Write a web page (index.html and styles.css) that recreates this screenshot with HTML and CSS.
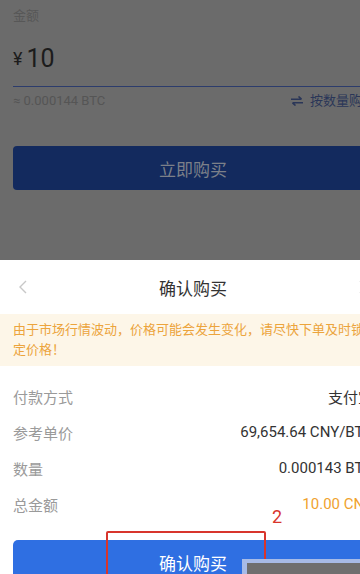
FILE: index.html
```html
<!DOCTYPE html>
<html lang="zh">
<head>
<meta charset="utf-8">
<link rel="stylesheet" href="styles.css">
</head>
<body>
<div class="page">
  <section class="top">
    <div class="label">金额</div>
    <div class="amount"><span class="yen">¥</span><span class="num">10</span></div>
    <div class="sub">
      <span class="approx">≈ 0.000144 BTC</span>
      <span class="switch"><svg class="swap" width="12" height="10" viewBox="0 0 12 10"><path d="M0 3.2h10.5M7.5 0.5l3 2.7M12 6.8H1.5M4.5 9.5l-3-2.7" fill="none" stroke="currentColor" stroke-width="1.6"/></svg>按数量购买</span>
    </div>
    <div class="buy-btn">立即购买</div>
  </section>
  <section class="sheet">
    <div class="head">
      <svg class="chev" width="10" height="14" viewBox="0 0 10 14"><path d="M8 1L2 7l6 6" fill="none" stroke="#c8c8c8" stroke-width="1.4"/></svg>
      <div class="title">确认购买</div>
      <svg class="chev" width="10" height="14" viewBox="0 0 10 14"><path d="M2 1l6 6-6 6" fill="none" stroke="#c8c8c8" stroke-width="1.4"/></svg>
    </div>
    <div class="notice">由于市场行情波动，价格可能会发生变化，请尽快下单及时锁定价格！</div>
    <div class="rows">
      <div class="row"><span class="k">付款方式</span><span class="v">支付宝</span></div>
      <div class="row"><span class="k">参考单价</span><span class="v">69,654.64 CNY/BTC</span></div>
      <div class="row"><span class="k">数量</span><span class="v">0.000143 BTC</span></div>
      <div class="row"><span class="k">总金额</span><span class="v total">10.00 CNY</span></div>
    </div>
    <div class="confirm-btn">确认购买</div>
  </section>
</div>
<div class="mark-box"></div>
<div class="mark-num">2</div>
<div class="toast"></div>
</body>
</html>
```
FILE: styles.css
```css
html, body {
  margin: 0;
  padding: 0;
}
body {
  width: 360px;
  height: 574px;
  overflow: hidden;
  position: relative;
  background: #6b6b6b;
  font-family: Roboto, "Noto Sans CJK SC", sans-serif;
}
.page {
  width: 386px;
}
.top {
  padding: 7px 0 0 13px;
}
.label {
  font-size: 13px;
  line-height: 18px;
  color: #575757;
}
.amount {
  margin-top: 15px;
  height: 36px;
  padding-bottom: 10px;
  border-bottom: 1px solid #2c3c6c;
  display: flex;
  align-items: center;
  color: #1c1c1c;
}
.yen {
  font-size: 18px;
  margin-right: 4px;
}
.num {
  font-size: 25px;
}
.sub {
  margin-top: 5px;
  display: flex;
  justify-content: space-between;
  align-items: center;
  line-height: 18px;
  padding-right: 13px;
}
.approx {
  color: #555;
  font-size: 13px;
}
.switch {
  color: #2a3658;
  display: flex;
  align-items: center;
  gap: 7px;
  font-size: 13px;
  margin-right: -2px;
}
.buy-btn {
  margin: 36px 13px 0 0;
  height: 44px;
  border-radius: 4px;
  background: #132a5e;
  color: #7c8089;
  font-size: 17px;
  display: flex;
  align-items: center;
  justify-content: center;
}
.sheet {
  margin-top: 70px;
  background: #fff;
  height: 330px;
}
.head {
  height: 54px;
  display: flex;
  align-items: center;
  justify-content: space-between;
  padding: 0 18px;
}
.title {
  font-size: 17px;
  color: #333;
}
.notice {
  background: #fdf6e8;
  color: #eca43c;
  font-size: 13px;
  line-height: 20px;
  padding: 6px 13px;
}
.rows {
  padding: 12px 13px 0;
}
.row {
  height: 36px;
  display: flex;
  align-items: center;
  justify-content: space-between;
  font-size: 15px;
}
.k {
  color: #9a9a9a;
}
.v {
  color: #333;
}
.v.total {
  color: #f0a22e;
}
.confirm-btn {
  margin: 18px 13px 0;
  height: 44px;
  border-radius: 5px;
  background: #2f6fe2;
  color: #fff;
  font-size: 17px;
  display: flex;
  align-items: center;
  justify-content: center;
}
.mark-box {
  position: absolute;
  left: 106px;
  top: 531px;
  width: 156px;
  height: 60px;
  border: 2.5px solid #d8352c;
  border-radius: 2px;
}
.mark-num {
  position: absolute;
  left: 272px;
  top: 506px;
  font-size: 18px;
  line-height: 22px;
  color: #d8352c;
}
.toast {
  position: absolute;
  left: 242px;
  top: 559px;
  width: 140px;
  height: 40px;
  background: #6f6f6f;
  border-top: 4px solid #a7bbe7;
  border-left: 5px solid #a7bbe7;
}
```
